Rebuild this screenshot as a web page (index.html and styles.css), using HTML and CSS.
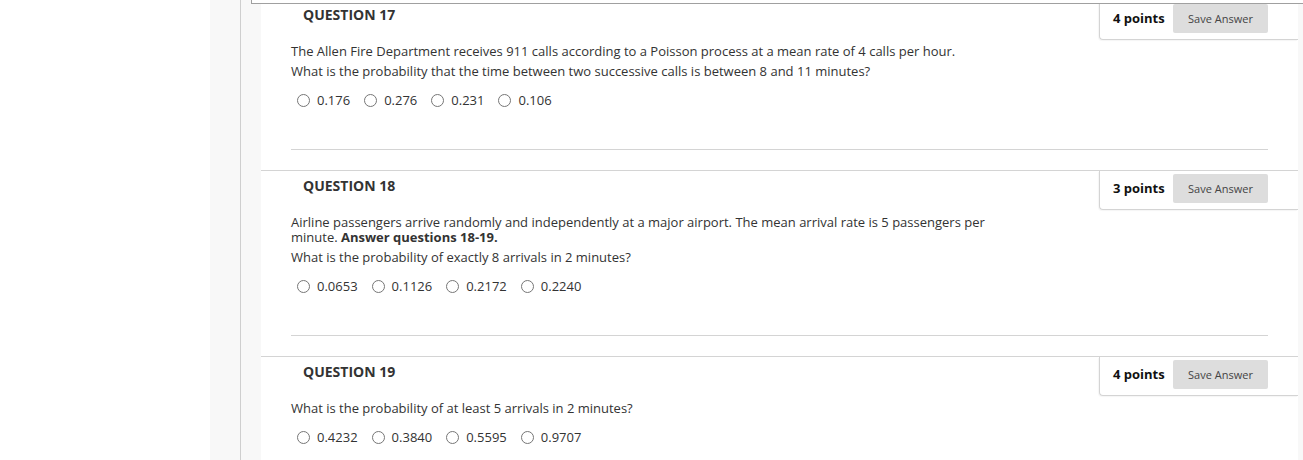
FILE: index.html
```html
<!DOCTYPE html>
<html>
<head>
<meta charset="utf-8">
<link rel="stylesheet" href="styles.css">
</head>
<body>
<div class="page">
  <div class="side"></div>
  <div class="rail"></div>
  <div class="content">
    <div class="prev"></div>
    <div class="question first">
      <div class="points-box"><span class="points">4 points</span><button class="save">Save Answer</button></div>
      <h3 class="q-title">QUESTION 17</h3>
      <div class="q-body">
        <p>The Allen Fire Department receives 911 calls according to a Poisson process at a mean rate of 4 calls per hour.</p>
        <p>What is the probability that the time between two successive calls is between 8 and 11 minutes?</p>
      </div>
      <div class="options">
        <label class="opt"><input type="radio" name="q17"><span>0.176</span></label>
        <label class="opt"><input type="radio" name="q17"><span>0.276</span></label>
        <label class="opt"><input type="radio" name="q17"><span>0.231</span></label>
        <label class="opt"><input type="radio" name="q17"><span>0.106</span></label>
      </div>
      <hr class="sep">
    </div>
    <div class="question">
      <div class="points-box"><span class="points">3 points</span><button class="save">Save Answer</button></div>
      <h3 class="q-title">QUESTION 18</h3>
      <div class="q-body">
        <p class="tight">Airline passengers arrive randomly and independently at a major airport. The mean arrival rate is 5 passengers per<br>minute. <b>Answer questions 18-19.</b></p>
        <p>What is the probability of exactly 8 arrivals in 2 minutes?</p>
      </div>
      <div class="options">
        <label class="opt"><input type="radio" name="q18"><span>0.0653</span></label>
        <label class="opt"><input type="radio" name="q18"><span>0.1126</span></label>
        <label class="opt"><input type="radio" name="q18"><span>0.2172</span></label>
        <label class="opt"><input type="radio" name="q18"><span>0.2240</span></label>
      </div>
      <hr class="sep">
    </div>
    <div class="question">
      <div class="points-box"><span class="points">4 points</span><button class="save">Save Answer</button></div>
      <h3 class="q-title">QUESTION 19</h3>
      <div class="q-body">
        <p>What is the probability of at least 5 arrivals in 2 minutes?</p>
      </div>
      <div class="options">
        <label class="opt"><input type="radio" name="q19"><span>0.4232</span></label>
        <label class="opt"><input type="radio" name="q19"><span>0.3840</span></label>
        <label class="opt"><input type="radio" name="q19"><span>0.5595</span></label>
        <label class="opt"><input type="radio" name="q19"><span>0.9707</span></label>
      </div>
      <hr class="sep">
    </div>
  </div>
</div>
</body>
</html>
```
FILE: styles.css
```css
html, body {
  margin: 0;
  padding: 0;
  background: #ffffff;
  overflow: hidden;
}
body {
  font-family: "Open Sans", "Liberation Sans", sans-serif;
  font-size: 13px;
  color: #333333;
}
.page {
  display: flex;
  height: 460px;
}
.side {
  width: 210px;
  flex: none;
  background: #ffffff;
}
.rail {
  width: 30px;
  flex: none;
  background: #f8f8f8;
  border-right: 1px solid #cfcfcf;
}
.content {
  flex: 1;
  background: #f8f8f8;
  padding: 0 5px 0 20px;
  min-width: 0;
}
.prev {
  position: relative;
  z-index: 1;
  height: 3px;
  margin-left: -10px;
  margin-right: -5px;
  border-left: 1px solid #a0a0a0;
  border-bottom: 1px solid #a0a0a0;
  background: #ffffff;
}
.question {
  background: #ffffff;
  border-top: 1px solid #d4d4d4;
  padding: 0 30px 20px 30px;
}
.question.first {
  border-top: none;
  margin-top: -4px;
  padding-top: 0;
}
.points-box {
  float: right;
  margin-right: -30px;
  width: 199px;
  height: 39px;
  box-sizing: border-box;
  display: flex;
  align-items: flex-start;
  padding: 3px 30px 0 13px;
  border-left: 1px solid #d4d4d4;
  border-bottom: 1px solid #d4d4d4;
  border-bottom-left-radius: 4px;
  box-shadow: -1px 1px 1px rgba(0,0,0,0.04);
  background: #ffffff;
}
.question.first .points-box {
  padding-top: 4px;
  height: 40px;
}
.points {
  font-weight: 700;
  font-size: 13px;
  color: #111111;
  line-height: 29px;
  flex: 1;
}
.save {
  width: 95px;
  height: 29px;
  border: none;
  border-radius: 2px;
  background: #dddddd;
  color: #444444;
  font-family: "Open Sans", "Liberation Sans", sans-serif;
  font-size: 11px;
  padding: 0;
}
.q-title {
  margin: 0;
  padding: 5px 0 0 12px;
  font-size: 14px;
  font-weight: 700;
  line-height: 19px;
  color: #333333;
}
.q-body {
  padding-top: 20px;
}
.q-body p {
  margin: 0 0 5px 0;
  line-height: 15px;
}
.options {
  display: flex;
  align-items: center;
  padding: 8px 0 0 5px;
  line-height: 17px;
}
.opt {
  display: flex;
  align-items: center;
  margin-right: 13px;
}
.opt input {
  margin: 0 7px 0 1px;
  width: 13px;
  height: 13px;
}
.sep {
  clear: both;
  border: none;
  border-top: 1px solid #d4d4d4;
  margin: 40px 0 0 0;
  height: 0;
}
```
